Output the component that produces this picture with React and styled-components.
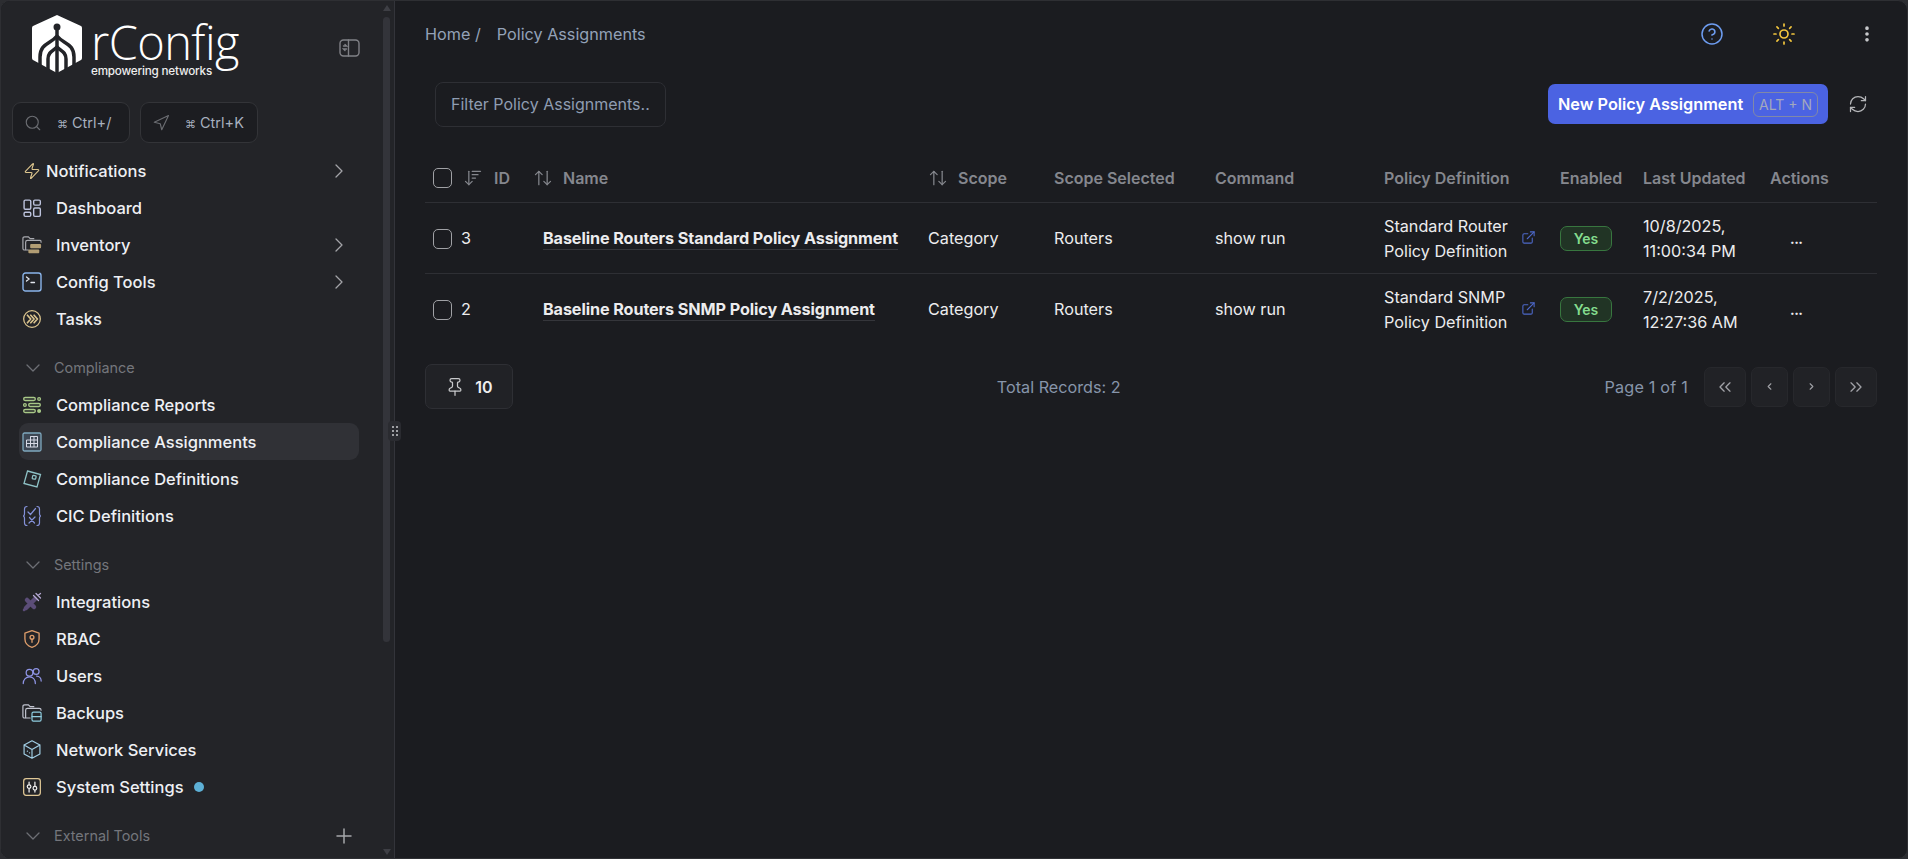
import React from 'react'
import styled, { createGlobalStyle } from 'styled-components'
import {
  Search, Navigation, Zap, ChevronRight, ChevronDown, Plus, Pin, ArrowUpDown,
  ExternalLink, CircleHelp, Sun, EllipsisVertical, RefreshCw, ChevronsLeft,
  ChevronsRight, ChevronLeft, ArrowDownWideNarrow,
} from 'lucide-react'

const GlobalStyle = createGlobalStyle`
  html, body { margin: 0; padding: 0; height: 100%; background: #2c2d31; }
  #root { height: 100%; }
  * { box-sizing: border-box; }
`

const Shell = styled.div`
  display: flex;
  width: 1908px;
  height: 859px;
  overflow: hidden;
  border-radius: 10px;
  border: 1px solid #2e2f33;
  background: #1b1c20;
  font-family: Inter, "Noto Sans", "Liberation Sans", sans-serif;
  font-size: 16px;
`

const Sidebar = styled.aside`
  position: relative;
  flex: 0 0 394px;
  height: 100%;
  padding: 0 12px 0 18px;
  background: #232428;
  border-right: 1px solid #33343a;
`

const Scrollbar = styled.div`
  position: absolute;
  top: 16px;
  right: 4px;
  width: 7px;
  height: 625px;
  border-radius: 4px;
  background: #33343a;
`

const ScrollArrow = styled.div`
  position: absolute;
  right: 3px;
  ${p => (p.$down ? 'bottom: 3px; border-top: 6px solid #3e3f45;' : 'top: 4px; border-bottom: 6px solid #3e3f45;')}
  border-left: 4.5px solid transparent;
  border-right: 4.5px solid transparent;
`

const DragHandle = styled.div`
  position: absolute;
  top: 420px;
  right: -7px;
  width: 13px;
  height: 20px;
  display: grid;
  grid-template-columns: 2px 2px;
  grid-auto-rows: 2px;
  gap: 2px;
  align-content: center;
  justify-content: center;
  border-radius: 4px;
  background: #2a2b30;
  z-index: 2;
  span { background: #c9cacc; border-radius: 1px; }
`

const LogoRow = styled.div`
  display: flex;
  align-items: flex-start;
  justify-content: space-between;
  height: 101px;
  padding: 14px 22px 0 12px;
`

const Brand = styled.div`
  display: flex;
  gap: 8px;
  color: #fff;
`

const BrandText = styled.div`
  display: flex;
  flex-direction: column;
  padding-top: 5px;
`

const BrandName = styled.div`
  font-family: "Open Sans", Inter, sans-serif;
  font-size: 47px;
  font-weight: 300;
  line-height: 44px;
  letter-spacing: -0.6px;
`

const BrandTag = styled.div`
  font-family: Inter, sans-serif;
  font-size: 11.7px;
  font-weight: 500;
  line-height: 14px;
  letter-spacing: -0.2px;
  color: #eee;
  margin-top: 0;
`

const Collapse = styled.div`
  margin-top: 23px;
  color: #808186;
  display: flex;
`

const ShortcutRow = styled.div`
  display: flex;
  gap: 10px;
  margin: 0 0 9px -7px;
`

const Shortcut = styled.div`
  display: flex;
  align-items: center;
  width: 118px;
  height: 41px;
  padding-left: 11px;
  gap: 15px;
  border: 1px solid #333438;
  border-radius: 9px;
  background: #1c1d21;
  color: #a7b0bf;
  font-size: 14.5px;
  white-space: nowrap;
  svg { color: #6b6d72; flex: none; }
  b { font-weight: 400; font-size: 11px; margin-right: 4px; }
`

const Nav = styled.nav`
  display: flex;
  flex-direction: column;
`

const Item = styled.div`
  display: flex;
  align-items: center;
  height: 37px;
  margin-right: 23px;
  padding-left: 3px;
  border-radius: 9px;
  color: #eef0f4;
  font-weight: 500;
  font-size: 16.5px;
  background: ${p => (p.$active ? '#303136' : 'transparent')};
`

const ItemIcon = styled.span`
  display: flex;
  align-items: center;
  justify-content: center;
  flex: none;
  width: 20px;
  height: 20px;
  margin-right: ${p => p.$tight ? '4px' : '14px'};
  color: ${p => p.$color};
`

const ItemArrow = styled(ChevronRight)`
  margin-left: auto;
  margin-right: 8px;
  color: #a3a4a8;
`

const Dot = styled.span`
  width: 10px;
  height: 10px;
  margin-left: 10px;
  border-radius: 50%;
  background: #5db0d6;
`

const Section = styled.div`
  display: flex;
  align-items: center;
  height: 37px;
  margin: 12px 23px 0 0;
  padding-left: 2px;
  color: #74767c;
  font-size: 14.4px;
  gap: 9px;
  svg { color: #6d6f75; }
`

const SectionPlus = styled(Plus)`
  margin-left: auto;
  margin-right: 3px;
  &&& { color: #a6a7aa; }
`

const Main = styled.main`
  flex: 1;
  min-width: 0;
  padding: 0 30px 0 30px;
`

const TopBar = styled.div`
  display: flex;
  align-items: center;
  height: 65px;
  color: #93a2b8;
  font-size: 16.2px;
`

const Crumb = styled.span`
  margin-right: ${p => p.$gap || 0}px;
`

const TopIcons = styled.div`
  margin-left: auto;
  display: flex;
  align-items: center;
`

const TopIcon = styled.span`
  display: flex;
  margin-left: ${p => p.$gap}px;
  color: ${p => p.$color};
`

const Toolbar = styled.div`
  display: flex;
  align-items: center;
  height: 40px;
  margin-top: 18px;
  padding-left: 10px;
`

const Filter = styled.div`
  display: flex;
  align-items: center;
  width: 231px;
  height: 45px;
  padding-left: 15px;
  border: 1px solid #2e2f34;
  border-radius: 8px;
  color: #8f9db2;
  font-size: 16px;
  white-space: nowrap;
`

const PrimaryButton = styled.div`
  display: flex;
  align-items: center;
  justify-content: space-between;
  width: 280px;
  height: 40px;
  margin-left: auto;
  padding: 0 10px;
  border-radius: 7px;
  background: #4b63e2;
  color: #fff;
  font-weight: 600;
  font-size: 16.3px;
  white-space: nowrap;
`

const Kbd = styled.span`
  padding: 2px 5px;
  height: 25px;
  border: 1px solid #8088a8;
  border-radius: 6px;
  color: #a3a8bd;
  font-size: 14px;
  font-weight: 400;
  line-height: 19px;
`

const Refresh = styled.span`
  display: flex;
  margin: 0 9px 0 20px;
  color: #b5b6b9;
`

const Table = styled.table`
  width: 1452px;
  margin-top: 31px;
  table-layout: fixed;
  border-collapse: collapse;
  color: #ececee;
`

const Th = styled.th`
  height: 47px;
  padding: 0 8px;
  border-bottom: 1px solid #2e2f34;
  text-align: left;
  font-weight: 600;
  font-size: 16px;
  color: #85878e;
  white-space: nowrap;
`

const Td = styled.td`
  height: 71px;
  padding: 2px 8px 0;
  border-bottom: ${p => (p.$last ? 'none' : '1px solid #2e2f34')};
  font-size: 16.2px;
  line-height: 25px;
`

const HeadCell = styled.div`
  display: flex;
  align-items: center;
  gap: ${p => p.$gap || 9}px;
  svg { color: #84868c; flex: none; }
`

const Check = styled.span`
  display: block;
  flex: none;
  width: 19px;
  height: 20px;
  border: 1.5px solid #a0a1a5;
  border-radius: 5px;
`

const IdCell = styled.div`
  display: flex;
  align-items: center;
  gap: 9px;
`

const NameLink = styled.span`
  margin-left: 10px;
  padding-bottom: 1px;
  border-bottom: 1px solid #35363b;
  font-weight: 700;
  font-size: 16.2px;
  letter-spacing: -0.1px;
  white-space: nowrap;
`

const DefCell = styled.div`
  display: flex;
  align-items: center;
  justify-content: space-between;
  padding-right: 8px;
  svg { color: #4d68c9; flex: none; margin-top: -2px; }
`

const Badge = styled.span`
  display: inline-flex;
  align-items: center;
  justify-content: center;
  width: 52px;
  height: 25px;
  border: 1px solid #38763f;
  border-radius: 7px;
  background: #213425;
  color: #84dc8e;
  font-weight: 600;
  font-size: 14px;
  margin-top: -2px;
`

const Dots = styled.div`
  padding-left: 20px;
  font-weight: 700;
  font-size: 14px;
  line-height: 30px;
  letter-spacing: -0.5px;
`

const Footer = styled.div`
  display: flex;
  align-items: center;
  justify-content: space-between;
  margin-top: 20px;
`

const PageSize = styled.div`
  display: flex;
  align-items: center;
  justify-content: center;
  gap: 10px;
  width: 88px;
  height: 45px;
  border: 1px solid #2e2f34;
  border-radius: 7px;
  background: #212226;
  color: #eee;
  font-weight: 600;
  font-size: 16px;
  svg { color: #c8c9cb; }
`

const Total = styled.div`
  color: #8795aa;
  font-size: 16.2px;
`

const Pager = styled.div`
  display: flex;
  align-items: center;
  gap: 5px;
  color: #8795aa;
  font-size: 16.2px;
`

const PagerLabel = styled.span`
  margin-right: 11px;
  letter-spacing: 0.2px;
`

const PageButton = styled.span`
  display: flex;
  align-items: center;
  justify-content: center;
  width: ${p => p.$wide ? 42 : 37}px;
  height: 40px;
  border: 1px solid #27282c;
  border-radius: 7px;
  background: #212226;
  color: #a0a1a6;
`

const I = { width: 20, height: 20, viewBox: '0 0 24 24', fill: 'none', stroke: 'currentColor', strokeWidth: 1.6, strokeLinecap: 'round', strokeLinejoin: 'round' }

const LogoMark = () => (
  <svg width="52" height="58" viewBox="0 0 52 58" style={{ flex: 'none' }}>
    <path fill="#fff" d="M26 0 L50 11 Q51 11.500 51 13 L51 43 Q51 44.500 50 45 L26 58 L2 45 Q1 44.500 1 43 L1 13 Q1 11.500 2 11 Z" />
    <g fill="none" stroke="#232428" strokeWidth="3.500">
      <circle cx="26" cy="12" r="2.500" fill="#232428" strokeWidth="2" />
      <path d="M26 14 V58" />
      <path d="M26 21 C20 29 9 28 9 42 V54" />
      <path d="M26 21 C32 29 43 28 43 42 V54" />
      <path d="M26 32 C22 36 17 37 17 44 V58" />
      <path d="M26 32 C30 36 35 37 35 44 V58" />
    </g>
    <path fill="#232428" d="M0 45 L9 50 V58 H0 Z M52 45 L43 50 V58 H52 Z" />
  </svg>
)

const CollapseIcon = () => (
  <svg width="21" height="21" viewBox="0 0 21 21" fill="none" stroke="currentColor" strokeWidth="1.4" strokeLinecap="round">
    <rect x="1" y="2" width="19" height="16" rx="3.500" />
    <path d="M9.500 2 V18 M4.500 8 H7.500 L6 6.500 M7.500 11 H4.500 L6 12.500" />
  </svg>
)

const DashboardIcon = () => (
  <svg {...I} strokeWidth="1.7">
    <rect x="2.500" y="2.500" width="8" height="11" rx="1.500" />
    <rect x="14" y="2.500" width="8" height="6" rx="1.500" />
    <rect x="14" y="12" width="8" height="10" rx="1.500" />
    <rect x="2.500" y="17" width="8" height="5" rx="1.500" />
  </svg>
)

const InventoryIcon = () => (
  <svg width="22" height="20" viewBox="0 0 22 20" fill="none" strokeLinecap="round">
    <path stroke="#a9aab0" strokeWidth="1.3" d="M7 15.500 H3 Q1 15.500 1 13.500 V3 Q1 1 3 1 H7 L9 3 H13" />
    <path stroke="#a9aab0" strokeWidth="1.3" d="M4 15 V7 Q4 5 6 5 H20 Q21 5 21 7" />
    <rect x="9" y="9" width="12" height="4.500" rx="1" fill="#b19d74" />
    <rect x="7" y="15" width="12" height="4" rx="1" fill="#b19d74" />
  </svg>
)

const ConfigIcon = () => (
  <svg width="20" height="20" viewBox="0 0 20 20" fill="none" strokeLinecap="round">
    <rect x="1" y="1" width="18" height="18" rx="2.500" stroke="#8ab4ea" strokeWidth="1.400" />
    <path stroke="#e3e6ee" strokeWidth="1.300" d="M4.500 5 L7 7 L4.500 9 M9 10.500 H12.500" />
  </svg>
)

const ReportsIcon = () => (
  <svg {...I} stroke="#a8c887" strokeWidth="1.6">
    <rect x="2" y="3" width="14" height="3.600" rx="1.800" />
    <circle cx="20.500" cy="4.800" r="1.600" />
    <circle cx="3.500" cy="12" r="1.600" />
    <rect x="8" y="10.200" width="14" height="3.600" rx="1.800" />
    <rect x="2" y="17.400" width="14" height="3.600" rx="1.800" />
    <circle cx="20.500" cy="19.200" r="1.600" fill="#a8c887" />
  </svg>
)

const AssignmentsIcon = () => (
  <svg width="20" height="20" viewBox="0 0 20 20" fill="none">
    <rect x="1" y="1" width="18" height="18" rx="1.500" fill="#3d4754" stroke="#7fa9bf" strokeWidth="1.300" />
    <path stroke="#d7d9e6" strokeWidth="1" fill="none" d="M8.500 4.500 H15.500 V15 H4.500 V8 H8.500 Z M4.500 11.500 H15.500 M8.500 8 H15.500 M8.500 4.500 V15 M12 4.500 V15" />
  </svg>
)

const DefinitionsIcon = () => (
  <svg width="20" height="20" viewBox="0 0 20 20" fill="none" stroke="#8ec2c6" strokeWidth="1.300">
    <path d="M5.500 2 L18.500 5.500 L15 18 L2 14.500 Z" />
    <rect x="10.500" y="6.500" width="3.500" height="3.500" rx="0.800" transform="rotate(14 12 8)" />
  </svg>
)

const CicIcon = () => (
  <svg width="20" height="22" viewBox="0 0 20 22" fill="none" stroke="#8491d8" strokeWidth="1.200" strokeLinecap="round">
    <path d="M5 1.500 Q2.500 1.500 2.500 4 V8.500 Q2.500 11 1 11 Q2.500 11 2.500 13.500 V18 Q2.500 20.500 5 20.500" />
    <path d="M15 1.500 Q17.500 1.500 17.500 4 V8.500 Q17.500 11 19 11 Q17.500 11 17.500 13.500 V18 Q17.500 20.500 15 20.500" />
    <path d="M6 7 L8.500 9.500 L13.500 3.500 M7 18 L13 12 M7.500 12.500 L12.500 18" />
  </svg>
)

const TasksIcon = () => (
  <svg {...I} stroke="#dcc58e" strokeWidth="1.500">
    <circle cx="12" cy="12" r="10" />
    <path strokeWidth="2" d="M6.500 7.500 L10.500 12 L6.500 16.500 M10.500 7.500 L14.500 12 L10.500 16.500 M14.500 7.500 L18.500 12 L14.500 16.500" />
  </svg>
)

const IntegrationsIcon = () => (
  <svg width="20" height="20" viewBox="0 0 20 20" fill="none" strokeLinecap="round">
    <path stroke="#5b4d78" strokeWidth="4.500" d="M4 16 L13 7 M5 8 L12 15" />
    <path stroke="#5b4d78" strokeWidth="2.500" d="M2 18 L4 16" />
    <path stroke="#b5a9d4" strokeWidth="1.300" d="M11.500 3.500 L16.500 8.500 M14 1.500 L18.500 6 M16 3.500 L18.500 1.500" />
  </svg>
)

const RbacIcon = () => (
  <svg {...I} stroke="#dd9d6b">
    <path d="M12 2 L20.500 5 V12 C20.500 17 16.500 20.500 12 22 C7.500 20.500 3.500 17 3.500 12 V5 Z" />
    <circle cx="12" cy="10" r="2.300" />
    <path d="M12 12.300 V16" />
  </svg>
)

const UsersIcon = () => (
  <svg width="22" height="20" viewBox="0 0 24 22" fill="none" stroke="#8f95e6" strokeWidth="1.500" strokeLinecap="round">
    <circle cx="9" cy="7" r="4" />
    <path d="M1.500 20 C1.500 15 5 12 9 12 C13 12 16 15 16 20" />
    <circle cx="17" cy="5.500" r="3.500" />
    <path d="M17.500 11 C20.500 11 23 13.500 23 17" />
  </svg>
)

const BackupsIcon = () => (
  <svg width="22" height="20" viewBox="0 0 22 20" fill="none" strokeLinecap="round">
    <path stroke="#c1c4cf" strokeWidth="1.300" d="M9 15.500 H3 Q1 15.500 1 13.500 V3 Q1 1 3 1 H7 L9 3 H13" />
    <path stroke="#c1c4cf" strokeWidth="1.300" d="M4 15 V7 Q4 5 6 5 H19 Q21 5 21 7" />
    <rect x="11" y="9" width="10" height="10" rx="1.500" stroke="#8fcde0" strokeWidth="1.300" />
    <path stroke="#8fcde0" strokeWidth="1.300" d="M11 14 H21" />
  </svg>
)

const ServicesIcon = () => (
  <svg {...I} width="21" height="21" stroke="#a2cfe6" strokeWidth="1.400">
    <path d="M12 1.500 L21.500 6.500 V17.500 L12 22.500 L2.500 17.500 V6.500 Z M2.500 6.500 L12 12 L21.500 6.500 M12 12 V22.500" />
    <path strokeWidth="1.600" d="M6.500 14 L6.600 14 M9 16 L9.100 16" />
  </svg>
)

const SystemIcon = () => (
  <svg {...I} stroke="#e0c896" strokeWidth="1.500">
    <rect x="2" y="2" width="20" height="20" rx="3" />
    <path stroke="#eee" d="M8.500 6 V9 M8.500 14 V18 M15.500 6 V11 M15.500 16 V18" />
    <circle cx="8.500" cy="11.500" r="2.200" stroke="#eee" />
    <circle cx="15.500" cy="13.500" r="2.200" stroke="#eee" />
  </svg>
)

const ROWS = [
  { id: 3, name: 'Baseline Routers Standard Policy Assignment', def: ['Standard Router', 'Policy Definition'], date: ['10/8/2025,', '11:00:34 PM'] },
  { id: 2, name: 'Baseline Routers SNMP Policy Assignment', def: ['Standard SNMP', 'Policy Definition'], date: ['7/2/2025,', '12:27:36 AM'] },
]

const NavItem = ({ icon, color, label, arrow, active, dot, tight }) => (
  <Item $active={active}>
    <ItemIcon $color={color} $tight={tight}>{icon}</ItemIcon>
    {label}
    {dot && <Dot />}
    {arrow && <ItemArrow size={24} strokeWidth={1.3} />}
  </Item>
)

const SectionHead = ({ label, plus }) => (
  <Section>
    <ChevronDown size={24} strokeWidth={1.3} />
    {label}
    {plus && <SectionPlus size={24} strokeWidth={1.5} />}
  </Section>
)

export default function App() {
  return (
    <Shell>
      <GlobalStyle />
      <Sidebar>
        <Scrollbar />
        <ScrollArrow />
        <ScrollArrow $down />
        <DragHandle>{[0, 1, 2, 3, 4, 5].map(i => <span key={i} />)}</DragHandle>
        <LogoRow>
          <Brand>
            <LogoMark />
            <BrandText>
              <BrandName>rConfig</BrandName>
              <BrandTag>empowering networks</BrandTag>
            </BrandText>
          </Brand>
          <Collapse><CollapseIcon /></Collapse>
        </LogoRow>
        <ShortcutRow>
          <Shortcut><Search size={18} strokeWidth={1.5} /><span><b>⌘</b>Ctrl+/</span></Shortcut>
          <Shortcut><Navigation size={18} strokeWidth={1.5} /><span><b>⌘</b>Ctrl+K</span></Shortcut>
        </ShortcutRow>
        <Nav>
          <NavItem tight icon={<Zap size={18} strokeWidth={1.5} />} color="#dcc58e" label="Notifications" arrow />
          <NavItem icon={<DashboardIcon />} color="#bcc2dc" label="Dashboard" />
          <NavItem icon={<InventoryIcon />} label="Inventory" arrow />
          <NavItem icon={<ConfigIcon />} label="Config Tools" arrow />
          <NavItem icon={<TasksIcon />} label="Tasks" />
          <SectionHead label="Compliance" />
          <NavItem icon={<ReportsIcon />} label="Compliance Reports" />
          <NavItem icon={<AssignmentsIcon />} label="Compliance Assignments" active />
          <NavItem icon={<DefinitionsIcon />} label="Compliance Definitions" />
          <NavItem icon={<CicIcon />} label="CIC Definitions" />
          <SectionHead label="Settings" />
          <NavItem icon={<IntegrationsIcon />} label="Integrations" />
          <NavItem icon={<RbacIcon />} label="RBAC" />
          <NavItem icon={<UsersIcon />} label="Users" />
          <NavItem icon={<BackupsIcon />} label="Backups" />
          <NavItem icon={<ServicesIcon />} label="Network Services" />
          <NavItem icon={<SystemIcon />} label="System Settings" dot />
          <SectionHead label="External Tools" plus />
        </Nav>
      </Sidebar>
      <Main>
        <TopBar>
          <Crumb $gap={16}>Home /</Crumb>
          <Crumb>Policy Assignments</Crumb>
          <TopIcons>
            <TopIcon $color="#6d9cf0"><CircleHelp size={24} strokeWidth={1.5} /></TopIcon>
            <TopIcon $gap={48} $color="#f2c53d"><Sun size={24} strokeWidth={1.7} /></TopIcon>
            <TopIcon $gap={61} $color="#c7c8cb"><EllipsisVertical size={20} strokeWidth={2.4} /></TopIcon>
          </TopIcons>
        </TopBar>
        <Toolbar>
          <Filter>Filter Policy Assignments..</Filter>
          <PrimaryButton>New Policy Assignment<Kbd>ALT + N</Kbd></PrimaryButton>
          <Refresh><RefreshCw size={20} strokeWidth={1.5} /></Refresh>
        </Toolbar>
        <Table>
          <colgroup>
            <col style={{ width: 100 }} />
            <col style={{ width: 395 }} />
            <col style={{ width: 126 }} />
            <col style={{ width: 161 }} />
            <col style={{ width: 169 }} />
            <col style={{ width: 176 }} />
            <col style={{ width: 83 }} />
            <col style={{ width: 127 }} />
            <col style={{ width: 115 }} />
          </colgroup>
          <thead>
            <tr>
              <Th><HeadCell $gap={11}><Check /><ArrowDownWideNarrow size={20} strokeWidth={1.5} /><span>ID</span></HeadCell></Th>
              <Th><HeadCell $gap={10}><ArrowUpDown size={20} strokeWidth={1.5} />Name</HeadCell></Th>
              <Th><HeadCell $gap={10}><ArrowUpDown size={20} strokeWidth={1.5} />Scope</HeadCell></Th>
              <Th>Scope Selected</Th>
              <Th>Command</Th>
              <Th>Policy Definition</Th>
              <Th>Enabled</Th>
              <Th>Last Updated</Th>
              <Th>Actions</Th>
            </tr>
          </thead>
          <tbody>
            {ROWS.map((row, i) => (
              <tr key={row.id}>
                <Td $last={i === 1}><IdCell><Check />{row.id}</IdCell></Td>
                <Td $last={i === 1}><NameLink>{row.name}</NameLink></Td>
                <Td $last={i === 1}>Category</Td>
                <Td $last={i === 1}>Routers</Td>
                <Td $last={i === 1}>show run</Td>
                <Td $last={i === 1}>
                  <DefCell>
                    <div>{row.def[0]}<br />{row.def[1]}</div>
                    <ExternalLink size={15} strokeWidth={1.7} />
                  </DefCell>
                </Td>
                <Td $last={i === 1}><Badge>Yes</Badge></Td>
                <Td $last={i === 1}>{row.date[0]}<br />{row.date[1]}</Td>
                <Td $last={i === 1}><Dots>...</Dots></Td>
              </tr>
            ))}
          </tbody>
        </Table>
        <Footer>
          <PageSize><Pin size={20} strokeWidth={1.5} />10</PageSize>
          <Total>Total Records: 2</Total>
          <Pager>
            <PagerLabel>Page 1 of 1</PagerLabel>
            <PageButton $wide><ChevronsLeft size={20} strokeWidth={1.6} /></PageButton>
            <PageButton><ChevronLeft size={11} strokeWidth={2.4} /></PageButton>
            <PageButton><ChevronRight size={11} strokeWidth={2.4} /></PageButton>
            <PageButton $wide><ChevronsRight size={20} strokeWidth={1.6} /></PageButton>
          </Pager>
        </Footer>
      </Main>
    </Shell>
  )
}
